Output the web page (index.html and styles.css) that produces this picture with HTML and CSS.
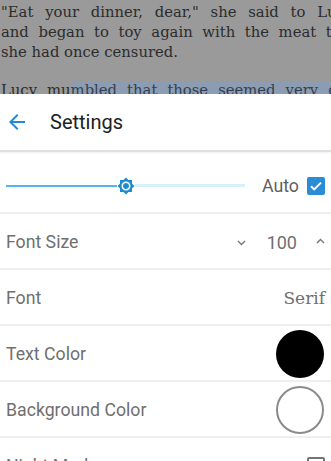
FILE: index.html
```html
<!DOCTYPE html>
<html lang="en">
<head>
    <meta charset="UTF-8">
    <meta name="viewport" content="width=device-width, initial-scale=1.0">
    <title>Reader Settings</title>
    <link rel="stylesheet" href="styles.css">
</head>
<body>
    <div class="screen">
        <!-- Book page, dimmed behind the settings sheet -->
        <div class="book">
            <p>
                <span class="line">"Eat your dinner, dear," she said to Lucy,</span>
                <span class="line">and began to toy again with the meat that</span>
                <span class="line last">she had once censured.</span>
            </p>
            <p>
                <span class="line">Lucy mu<span class="selected">mbled that those seemed very odd</span></span>
            </p>
        </div>

        <div class="sheet">
            <div class="sheet-header">
                <svg class="back-icon" width="24" height="24" viewBox="0 0 24 24"><path d="M20 11H7.830l5.59-5.590L12 4l-8 8 8 8 1.41-1.41L7.830 13H20v-2z"/></svg>
                <h2>Settings</h2>
            </div>

            <div class="brightness-row">
                <div class="slider">
                    <div class="track-on"></div>
                    <svg class="thumb" width="18" height="18" viewBox="0 0 24 24"><path d="M20 8.69V4h-4.69L12 .69 8.69 4H4v4.69L.69 12 4 15.31V20h4.69L12 23.31 15.31 20H20v-4.69L23.31 12 20 8.69zM12 18c-3.31 0-6-2.690-6-6s2.69-6 6-6 6 2.69 6 6-2.69 6-6 6zm0-10c-2.21 0-4 1.79-4 4s1.79 4 4 4 4-1.790 4-4-1.79-4-4-4z"/></svg>
                    <div class="track-off"></div>
                </div>
                <span class="auto-label">Auto</span>
                <span class="checkbox checked">
                    <svg width="18" height="18" viewBox="0 0 18 18"><path d="M4 9.2l3.2 3.2L14 5.6" fill="none" stroke="#fff" stroke-width="2"/></svg>
                </span>
            </div>

            <div class="setting-row">
                <span class="label">Font Size</span>
                <svg class="chevron down" width="9" height="6" viewBox="0 0 9 6"><path d="M1 1l3.5 3.5L8 1" fill="none" stroke="#757575" stroke-width="1.4"/></svg>
                <span class="value">100</span>
                <svg class="chevron up" width="9" height="6" viewBox="0 0 9 6"><path d="M1 5l3.5-3.5L8 5" fill="none" stroke="#757575" stroke-width="1.4"/></svg>
            </div>

            <div class="setting-row">
                <span class="label">Font</span>
                <span class="font-value">Serif</span>
            </div>

            <div class="setting-row">
                <span class="label">Text Color</span>
                <span class="swatch black"></span>
            </div>

            <div class="setting-row">
                <span class="label">Background Color</span>
                <span class="swatch white"></span>
            </div>

            <div class="setting-row">
                <span class="label">Night Mode</span>
                <span class="checkbox"></span>
            </div>
        </div>
    </div>
</body>
</html>
```

FILE: styles.css
```css
body {
    margin: 0;
    font-family: Roboto, "Noto Sans", sans-serif;
    background-color: #fff;
}

.screen {
    width: 331px;
    height: 461px;
    overflow: hidden;
}

/* dimmed page of the book */
.book {
    height: 94px;
    overflow: hidden;
    background-color: #9a9a9a;
    color: #2c2c2c;
    font-family: "DejaVu Serif", serif;
    font-size: 14.8px;
    line-height: 20px;
    padding: 2px 0 0 1px;
    box-sizing: border-box;
}

.book p {
    margin: 0 0 18px;
    width: 355px;
}

.book .line {
    display: block;
    white-space: nowrap;
    text-align: justify;
    text-align-last: justify;
}

.book .line.last {
    text-align-last: left;
}

.book .selected {
    background-color: #8c9cb2;
    color: #34404e;
}

.sheet {
    background-color: #fff;
}

.sheet-header {
    display: flex;
    align-items: center;
    height: 56px;
    padding-left: 5px;
    border-bottom: 2px solid #e0e0e0;
    box-shadow: 0 1px 2px rgba(0, 0, 0, 0.06);
}

.back-icon {
    fill: #2389d6;
}

.sheet-header h2 {
    margin: 0 0 0 21px;
    font-size: 20px;
    font-weight: 400;
    color: #212121;
}

.brightness-row {
    display: flex;
    align-items: center;
    height: 60px;
    padding: 7px 6px 0;
    box-sizing: border-box;
}

.slider {
    display: flex;
    align-items: center;
    width: 240px;
}

.track-on {
    width: 111px;
    height: 2px;
    background-color: #55b6ea;
}

.thumb {
    fill: #1c8ccd;
    flex-shrink: 0;
}

.track-off {
    flex: 1;
    height: 3px;
    background-color: #d8f0fb;
}

.auto-label {
    margin-left: 17px;
    font-size: 17.8px;
    color: #5f5f5f;
}

.checkbox {
    display: inline-block;
    width: 18px;
    height: 18px;
    box-sizing: border-box;
    border: 2px solid #757575;
    border-radius: 2px;
    margin-left: 8px;
}

.checkbox.checked {
    border: none;
    background-color: #2a8bd6;
}

.checkbox svg {
    display: block;
}

.setting-row {
    display: flex;
    align-items: center;
    height: 56px;
    padding: 2px 6px 0;
    border-top: 2px solid #edf0f1;
    box-sizing: border-box;
}

.setting-row .label {
    flex: 1;
    font-size: 17.7px;
    color: #6f6f6f;
}

.setting-row .value {
    margin: 0 19px 0 21px;
    font-size: 18px;
    color: #6f6f6f;
}

.chevron.down {
    margin-top: 2px;
}

.chevron.up {
    margin-top: -3px;
}

.font-value {
    font-family: "DejaVu Serif", serif;
    font-size: 17px;
    color: #6f6f6f;
}

.swatch {
    width: 48px;
    height: 48px;
    border-radius: 50%;
    box-sizing: border-box;
    margin-right: 1px;
}

.swatch.black {
    background-color: #000;
}

.swatch.white {
    background-color: #fff;
    border: 2px solid #8a8a8a;
}
```
